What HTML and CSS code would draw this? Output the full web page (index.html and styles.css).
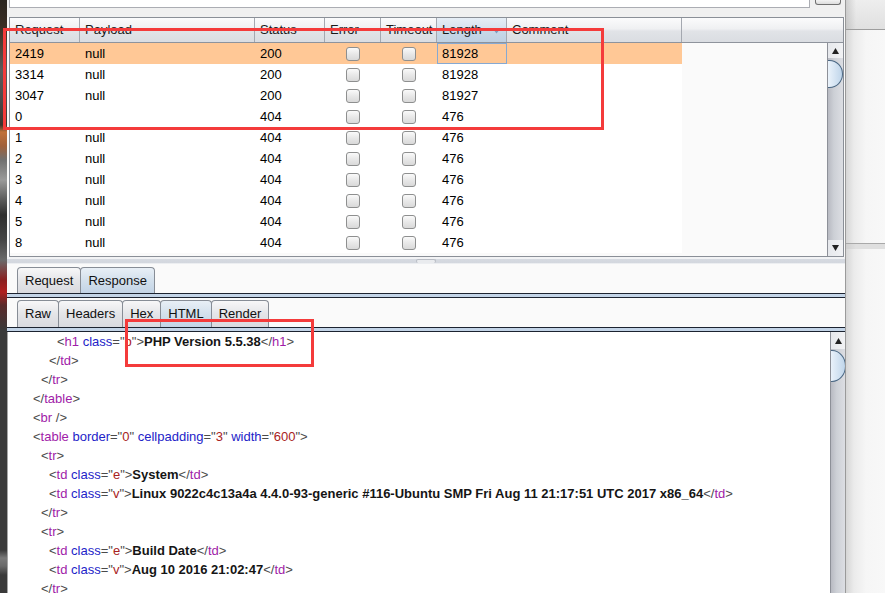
FILE: index.html
```html
<!DOCTYPE html>
<html>
<head>
<meta charset="utf-8">
<title>Intruder results</title>
<link rel="stylesheet" href="styles.css">
</head>
<body>
<div class="desk"></div>
<div class="win">
  <div class="topbar"><div class="field"></div><div class="btn"></div></div>
  <div class="results">
    <div class="thead">
      <div class="th w-req">Request</div>
      <div class="th w-pay">Payload</div>
      <div class="th w-st">Status</div>
      <div class="th w-err">Error</div>
      <div class="th w-tmo">Timeout</div>
      <div class="th w-len sorted">Length<svg class="sort" width="7" height="5" viewBox="0 0 7 5"><polygon points="0,0 7,0 3.5,4.5" fill="#7d9cbe"/></svg></div>
      <div class="th w-cmt">Comment</div>
      <div class="th-fill"></div>
    </div>
    <div class="tbody">
      <div class="rows">
        <div class="row sel"><div class="td w-req">2419</div><div class="td w-pay">null</div><div class="td w-st">200</div><div class="td w-err ck"><span class="cb"></span></div><div class="td w-tmo ck"><span class="cb"></span></div><div class="td w-len focus">81928</div><div class="td w-cmt"></div></div>
        <div class="row"><div class="td w-req">3314</div><div class="td w-pay">null</div><div class="td w-st">200</div><div class="td w-err ck"><span class="cb"></span></div><div class="td w-tmo ck"><span class="cb"></span></div><div class="td w-len">81928</div><div class="td w-cmt"></div></div>
        <div class="row"><div class="td w-req">3047</div><div class="td w-pay">null</div><div class="td w-st">200</div><div class="td w-err ck"><span class="cb"></span></div><div class="td w-tmo ck"><span class="cb"></span></div><div class="td w-len">81927</div><div class="td w-cmt"></div></div>
        <div class="row"><div class="td w-req">0</div><div class="td w-pay"></div><div class="td w-st">404</div><div class="td w-err ck"><span class="cb"></span></div><div class="td w-tmo ck"><span class="cb"></span></div><div class="td w-len">476</div><div class="td w-cmt"></div></div>
        <div class="row"><div class="td w-req">1</div><div class="td w-pay">null</div><div class="td w-st">404</div><div class="td w-err ck"><span class="cb"></span></div><div class="td w-tmo ck"><span class="cb"></span></div><div class="td w-len">476</div><div class="td w-cmt"></div></div>
        <div class="row"><div class="td w-req">2</div><div class="td w-pay">null</div><div class="td w-st">404</div><div class="td w-err ck"><span class="cb"></span></div><div class="td w-tmo ck"><span class="cb"></span></div><div class="td w-len">476</div><div class="td w-cmt"></div></div>
        <div class="row"><div class="td w-req">3</div><div class="td w-pay">null</div><div class="td w-st">404</div><div class="td w-err ck"><span class="cb"></span></div><div class="td w-tmo ck"><span class="cb"></span></div><div class="td w-len">476</div><div class="td w-cmt"></div></div>
        <div class="row"><div class="td w-req">4</div><div class="td w-pay">null</div><div class="td w-st">404</div><div class="td w-err ck"><span class="cb"></span></div><div class="td w-tmo ck"><span class="cb"></span></div><div class="td w-len">476</div><div class="td w-cmt"></div></div>
        <div class="row"><div class="td w-req">5</div><div class="td w-pay">null</div><div class="td w-st">404</div><div class="td w-err ck"><span class="cb"></span></div><div class="td w-tmo ck"><span class="cb"></span></div><div class="td w-len">476</div><div class="td w-cmt"></div></div>
        <div class="row"><div class="td w-req">8</div><div class="td w-pay">null</div><div class="td w-st">404</div><div class="td w-err ck"><span class="cb"></span></div><div class="td w-tmo ck"><span class="cb"></span></div><div class="td w-len">476</div><div class="td w-cmt"></div></div>
      </div>
      <div class="vscroll">
        <div class="sb-btn"><svg width="7" height="6" viewBox="0 0 7 6"><polygon points="3.5,0 7,6 0,6" fill="#222"/></svg></div>
        <div class="thumb"></div>
        <div class="sb-btn down"><svg width="7" height="6" viewBox="0 0 7 6"><polygon points="0,0 7,0 3.5,6" fill="#222"/></svg></div>
      </div>
    </div>
  </div>
  <div class="divider"><span class="grip"></span></div>
  <div class="tabs tabs1">
    <div class="tab">Request</div>
    <div class="tab on">Response</div>
  </div>
  <div class="tabline"></div>
  <div class="tabs tabs2">
    <div class="tab">Raw</div>
    <div class="tab">Headers</div>
    <div class="tab">Hex</div>
    <div class="tab on">HTML</div>
    <div class="tab">Render</div>
  </div>
  <div class="tabline"></div>
  <div class="code">
    <div class="lines">
      <div class="ln i3"><span class="p">&lt;</span><span class="t">h1</span> <span class="a">class</span><span class="p">=&quot;</span><span class="v">p</span><span class="p">&quot;&gt;</span><b>PHP Version 5.5.38</b><span class="p">&lt;/</span><span class="t">h1</span><span class="p">&gt;</span></div>
      <div class="ln i2"><span class="p">&lt;/</span><span class="t">td</span><span class="p">&gt;</span></div>
      <div class="ln i1"><span class="p">&lt;/</span><span class="t">tr</span><span class="p">&gt;</span></div>
      <div class="ln"><span class="p">&lt;/</span><span class="t">table</span><span class="p">&gt;</span></div>
      <div class="ln"><span class="p">&lt;</span><span class="t">br</span> <span class="p">/&gt;</span></div>
      <div class="ln"><span class="p">&lt;</span><span class="t">table</span> <span class="a">border</span><span class="p">=&quot;</span><span class="v">0</span><span class="p">&quot;</span> <span class="a">cellpadding</span><span class="p">=&quot;</span><span class="v">3</span><span class="p">&quot;</span> <span class="a">width</span><span class="p">=&quot;</span><span class="v">600</span><span class="p">&quot;&gt;</span></div>
      <div class="ln i1"><span class="p">&lt;</span><span class="t">tr</span><span class="p">&gt;</span></div>
      <div class="ln i2"><span class="p">&lt;</span><span class="t">td</span> <span class="a">class</span><span class="p">=&quot;</span><span class="v">e</span><span class="p">&quot;&gt;</span><b>System</b><span class="p">&lt;/</span><span class="t">td</span><span class="p">&gt;</span></div>
      <div class="ln i2"><span class="p">&lt;</span><span class="t">td</span> <span class="a">class</span><span class="p">=&quot;</span><span class="v">v</span><span class="p">&quot;&gt;</span><b>Linux 9022c4c13a4a 4.4.0-93-generic #116-Ubuntu SMP Fri Aug 11 21:17:51 UTC 2017 x86_64</b><span class="p">&lt;/</span><span class="t">td</span><span class="p">&gt;</span></div>
      <div class="ln i1"><span class="p">&lt;/</span><span class="t">tr</span><span class="p">&gt;</span></div>
      <div class="ln i1"><span class="p">&lt;</span><span class="t">tr</span><span class="p">&gt;</span></div>
      <div class="ln i2"><span class="p">&lt;</span><span class="t">td</span> <span class="a">class</span><span class="p">=&quot;</span><span class="v">e</span><span class="p">&quot;&gt;</span><b>Build Date</b><span class="p">&lt;/</span><span class="t">td</span><span class="p">&gt;</span></div>
      <div class="ln i2"><span class="p">&lt;</span><span class="t">td</span> <span class="a">class</span><span class="p">=&quot;</span><span class="v">v</span><span class="p">&quot;&gt;</span><b>Aug 10 2016 21:02:47</b><span class="p">&lt;/</span><span class="t">td</span><span class="p">&gt;</span></div>
      <div class="ln i1"><span class="p">&lt;/</span><span class="t">tr</span><span class="p">&gt;</span></div>
    </div>
    <div class="vscroll vscroll2">
      <div class="sb-btn"><svg width="7" height="6" viewBox="0 0 7 6"><polygon points="3.5,0 7,6 0,6" fill="#222"/></svg></div>
      <div class="thumb"></div>
    </div>
  </div>
</div>
<div class="side">
  <div class="side-top"></div>
  <div class="side-mid"></div>
  <div class="side-band"></div>
  <div class="side-bot"></div>
</div>
<div class="mark mark1"></div>
<div class="mark mark2"></div>
</body>
</html>
```
FILE: styles.css
```css
html, body { margin: 0; padding: 0; }
body {
  width: 885px; height: 593px; overflow: hidden;
  display: flex; position: relative;
  font-family: "Liberation Sans", Arial, sans-serif; font-size: 13px; color: #000;
  background: #f0f0f0;
}
.desk {
  width: 7px; flex: none;
  background: linear-gradient(to bottom,
    #2b2620 0, #3a2e24 25px, #4c4136 45px, #5b5b5b 70px, #4a4a4a 100px,
    #3a342e 125px, #c07038 132px, #a0603a 146px, #707070 160px, #9a9a9a 180px,
    #5a5a5a 200px, #2e2e2e 215px, #454545 240px, #6a6a6a 260px, #8a2020 280px,
    #b02020 292px, #5a2a2a 305px, #3a3a3a 330px, #3a3a3a 550px, #7a7a7a 558px,
    #6a6a6a 566px, #3a3a3a 575px);
}
.win {
  width: 838px; flex: none; display: flex; flex-direction: column;
  border-right: 1px solid #9a9a9a; background: #fafafa;
}
.topbar { height: 17px; flex: none; display: flex; background: #f0f0f0; }
.field {
  margin-left: 2px; width: 799px; height: 7px; background: #fff;
  border: 1px solid #abadb3; border-top: none;
}
.btn {
  margin-left: 5px; width: 24px; height: 4px;
  border: 1px solid #707070; border-top: none; border-radius: 0 0 3px 3px;
  background: linear-gradient(#f2f2f2, #dcdcdc);
}
.results {
  margin-left: 2px; width: 835px; height: 240px; flex: none; box-sizing: border-box;
  border: 1px solid #8a8f97; display: flex; flex-direction: column; background: #fafafa;
}
.thead {
  height: 25px; flex: none; box-sizing: border-box; display: flex;
  border-bottom: 1px solid #8e939c;
  background: linear-gradient(to bottom, #fbfbfc 0%, #eff0f2 45%, #e1e3e7 55%, #dadde2 100%);
}
.th {
  box-sizing: border-box; padding-left: 5px; line-height: 24px; color: #1a1a1a;
  border-right: 1px solid #a4a8b0; white-space: nowrap; overflow: hidden;
  position: relative;
}
.th.sorted { background: linear-gradient(to bottom, #e6eef6 0%, #d6e2ee 45%, #c7d7e7 55%, #bfd1e3 100%); }
.sort { position: absolute; right: 6px; top: 11px; }
.th-fill { flex: 1; }
.w-req { width: 70px; }
.w-pay { width: 175px; }
.w-st { width: 70px; }
.w-err { width: 56px; }
.w-tmo { width: 56px; }
.w-len { width: 70px; }
.w-cmt { width: 175px; }
.tbody { flex: 1; display: flex; min-height: 0; }
.rows { flex: 1; overflow: hidden; background: #fafafa; }
.row { display: flex; height: 21px; line-height: 21px; width: 672px; background: #fff; }
.row.sel { background: #ffc896; }
.td { box-sizing: border-box; padding-left: 5px; white-space: nowrap; flex: none; }
.td.focus { border: 1px solid #86a9d2; padding-left: 4px; line-height: 19px; }
.ck { display: flex; align-items: center; justify-content: center; padding-left: 0; }
.cb {
  width: 14px; height: 14px; box-sizing: border-box; border: 1px solid #8e8f8f; border-radius: 3px;
  background: linear-gradient(to bottom, #fafafa, #e8e8e8 50%, #d9d9d9);
}
.vscroll {
  width: 16px; flex: none; display: flex; flex-direction: column; overflow: hidden;
  border-left: 1px solid #8d9098; box-sizing: border-box;
  background: linear-gradient(to right, #b8bac2 0, #cdd0d6 40%, #dcdee3 100%);
}
.sb-btn {
  height: 15px; flex: none; display: flex; align-items: center; justify-content: center;
  background: linear-gradient(to right, #e6e8ec, #f1f2f4);
}
.sb-btn.down { margin-top: auto; height: 16px; }
.thumb {
  flex: none; width: 27px; height: 28px; margin: 2px 0 0 -12px; box-sizing: border-box;
  border: 1px solid #4b6884; border-radius: 50%;
  background: linear-gradient(to right, #eef5fc 40%, #bfd5ea);
}
.divider {
  height: 7px; flex: none; display: flex; justify-content: center;
  background: linear-gradient(to bottom, #f2f3f5 0, #f2f3f5 2px, #d6dae1 2px, #d3d7de 6px, #eceef1 6px);
}
.grip { width: 18px; height: 3px; margin-top: 2px; border-radius: 2px; background: #e9ebee; border: 1px solid #b8bcc4; border-bottom: none; }
.tabs { display: flex; align-items: flex-end; padding-left: 10px; flex: none; }
.tabs1 { height: 29px; }
.tabs2 { height: 29px; }
.tab {
  box-sizing: border-box; height: 26px; padding: 0 7px; line-height: 25px;
  border: 1px solid #878d96; border-bottom: none; border-radius: 4px 4px 0 0;
  background: linear-gradient(to bottom, #f7f7f8, #e4e5e8 50%, #d9dadf);
  margin-right: -1px; color: #111; white-space: nowrap;
}
.tabs2 .tab { height: 27px; line-height: 26px; }
.tab.on { background: linear-gradient(to bottom, #e8eff6, #d3e0ec 50%, #c3d4e6); position: relative; }
.tabline {
  height: 5px; flex: none; box-sizing: border-box;
  border-top: 1px solid #1c2330; border-bottom: 1px solid #1c2330; background: #c3d4e7;
}
.code { flex: 1; display: flex; min-height: 0; }
.lines {
  flex: 1; background: #fff; border-left: 1px solid #a6a6a6; padding-left: 25px;
  line-height: 19px; overflow: hidden;
}
.ln { white-space: pre; height: 19px; }
.ln.i1 { padding-left: 8px; }
.ln.i2 { padding-left: 16px; }
.ln.i3 { padding-left: 24px; }
.p { color: #4a4a4a; }
.t { color: #a01ca8; }
.a { color: #2323c8; }
.v { color: #a82222; }
.lines b { color: #151515; }
.vscroll2 { width: 15px; }
.vscroll2 .sb-btn { height: 17px; }
.vscroll2 .thumb { height: 32px; margin-top: 1px; width: 28px; margin-left: -13px; }
.side { flex: 1; display: flex; flex-direction: column; }
.side-top {
  height: 29px; flex: none; border-bottom: 1px solid #9d9d9d;
  background: linear-gradient(to right, rgba(150,150,150,.35), rgba(150,150,150,0) 10px),
              linear-gradient(to bottom, #eeeeee, #e0e0e0);
}
.side-mid, .side-bot {
  background: linear-gradient(to right, #d6d6d6 0, #ebebeb 8px, #f6f6f6 20px, #f8f8f8 100%);
}
.side-mid { height: 213px; flex: none; }
.side-band {
  height: 5px; flex: none; border-top: 1px solid #a9a9a9;
  background: linear-gradient(to right, #cfcfcf, #dfdfdf 10px);
}
.side-bot { flex: 1; }
.mark { position: absolute; box-sizing: border-box; border: 3px solid #f43b3b; pointer-events: none; }
.mark1 { left: 3px; top: 28px; width: 601px; height: 102px; }
.mark2 { left: 125px; top: 319px; width: 189px; height: 48px; }
```
